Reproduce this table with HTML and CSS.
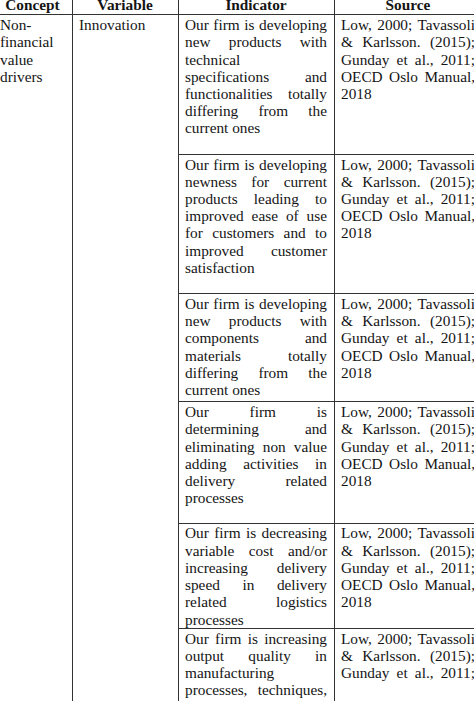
FILE: index.html
```html
<!DOCTYPE html>
<html lang="en">
<head>
<meta charset="utf-8">
<title>Value drivers table</title>
<link rel="stylesheet" href="styles.css">
</head>
<body>
<table class="grid">
  <colgroup>
    <col class="c-concept">
    <col class="c-variable">
    <col class="c-indicator">
    <col class="c-source">
  </colgroup>
  <thead>
    <tr>
      <th>Concept</th>
      <th>Variable</th>
      <th>Indicator</th>
      <th>Source</th>
    </tr>
  </thead>
  <tbody>
    <tr class="row-tall">
      <td class="plain" rowspan="6">Non-financial value drivers</td>
      <td class="plain" rowspan="6">Innovation</td>
      <td class="just">Our firm is developing new products with technical specifications and functionalities totally differing from the current ones</td>
      <td class="just">Low, 2000; Tavassoli &amp; Karlsson. (2015); Gunday et al., 2011; OECD Oslo Manual, 2018</td>
    </tr>
    <tr class="row-tall">
      <td class="just">Our firm is developing newness for current products leading to improved ease of use for customers and to improved customer satisfaction</td>
      <td class="just">Low, 2000; Tavassoli &amp; Karlsson. (2015); Gunday et al., 2011; OECD Oslo Manual, 2018</td>
    </tr>
    <tr class="row-mid">
      <td class="just">Our firm is developing new products with components and materials totally differing from the current ones</td>
      <td class="just">Low, 2000; Tavassoli &amp; Karlsson. (2015); Gunday et al., 2011; OECD Oslo Manual, 2018</td>
    </tr>
    <tr class="row-tall">
      <td class="just">Our firm is determining and eliminating non value adding activities in delivery related processes</td>
      <td class="just">Low, 2000; Tavassoli &amp; Karlsson. (2015); Gunday et al., 2011; OECD Oslo Manual, 2018</td>
    </tr>
    <tr class="row-tight">
      <td class="just">Our firm is decreasing variable cost and/or increasing delivery speed in delivery related logistics processes</td>
      <td class="just">Low, 2000; Tavassoli &amp; Karlsson. (2015); Gunday et al., 2011; OECD Oslo Manual, 2018</td>
    </tr>
    <tr class="row-last">
      <td class="just">Our firm is increasing output quality in manufacturing processes, techniques, equipment and software</td>
      <td class="just just-all">Low, 2000; Tavassoli &amp; Karlsson. (2015); Gunday et al., 2011;</td>
    </tr>
  </tbody>
</table>
</body>
</html>
```
FILE: styles.css
```css
html, body {
  margin: 0;
  padding: 0;
  overflow: hidden;
  background: #ffffff;
}

body {
  font-family: "Liberation Serif", "Times New Roman", serif;
  font-size: 15.3px;
  line-height: 17.2px;
  color: #141414;
}

.grid {
  border-collapse: collapse;
  table-layout: fixed;
  width: 489px;
  margin: -4px 0 0 -7px;
}

.c-concept { width: 79px; }
.c-variable { width: 106px; }
.c-indicator { width: 156px; }
.c-source { width: 148px; }

.grid th,
.grid td {
  border-left: 1px solid #333333;
  border-right: 1px solid #333333;
  vertical-align: top;
  padding: 1px 7px 1px 6px;
}

.grid th {
  font-weight: bold;
  text-align: center;
  padding-top: 0;
  border-bottom: 1px solid #333333;
}

.grid td {
  border-bottom: 1px solid #333333;
}

.plain {
  text-align: left;
}

.just {
  text-align: justify;
}

.just-all {
  text-align-last: justify;
}

.row-tall .just {
  padding-bottom: 17px;
}

.row-mid .just {
  padding-bottom: 3px;
}

.row-tight .just {
  padding-top: 0;
  padding-bottom: 0;
}

.row-last .just {
  padding-bottom: 40px;
}
```
